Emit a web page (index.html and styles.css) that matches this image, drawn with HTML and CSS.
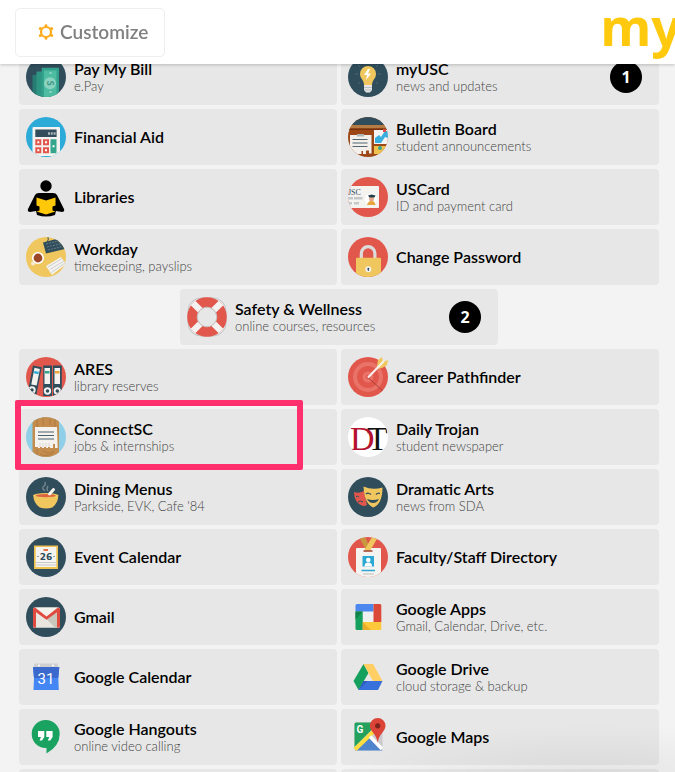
FILE: index.html
```html
<!DOCTYPE html>
<html lang="en">
<head>
<meta charset="utf-8">
<title>myUSC</title>
<meta name="viewport" content="width=device-width, initial-scale=1">
<link rel="stylesheet" href="styles.css">
</head>
<body>
<header class="topbar">
  <button class="customize" type="button">
    <svg class="gear" viewBox="0 0 16 16" aria-hidden="true"><circle cx="8" cy="8" r="5" fill="none" stroke="#fdab1c" stroke-width="2.2"/><g fill="#fdab1c"><circle cx="8" cy="1.6" r="1.4"/><circle cx="8" cy="14.4" r="1.4"/><circle cx="2.3" cy="4.6" r="1.5"/><circle cx="13.7" cy="4.6" r="1.5"/><circle cx="2.3" cy="11.4" r="1.5"/><circle cx="13.7" cy="11.4" r="1.5"/></g></svg>
    <span>Customize</span>
  </button>
  <span class="brand">my</span>
</header>
<main class="tiles">
  <a class="tile" href="#">
    <svg class="icon round" viewBox="0 0 40 40"><path fill="#304d5c" d="M0 0h40v40H0z"/><path fill="#267c72" d="M6.5 18h6v22h-6z"/><path fill="#2f9583" d="M10.5 14.5h7V40h-7z"/><path fill="#32a28c" d="M15.7 10.7H33V40H15.7z"/><path fill="#4dbca1" d="M18 13.5h12.5V40H18z"/><path fill="#8ed6c4" d="M23.5 15h2v2h-2zM23.5 34h2v2h-2z"/><circle cx="24" cy="26.3" r="6" fill="#8bd2c0"/><text x="24" y="29.5" text-anchor="middle" class="coin" transform="rotate(90 24 26.3)">S</text></svg>
    <span class="label"><span class="name">Pay My Bill</span><span class="note">e.Pay</span></span>
  </a>
  <a class="tile" href="#">
    <svg class="icon round" viewBox="0 0 40 40"><path fill="#304d5c" d="M0 0h40v40H0z"/><path stroke="#4c6673" stroke-width="1" d="M20 3v3M7 17h3M30 17h3M10 8l2 2M30 8l-2 2M10 27l2-2M30 27l-2-2"/><path fill="#efc75e" d="M20 9a8 8 0 0 0-8 8c0 4.500 4 6 4 11h8c0-5 4-6.500 4-11a8 8 0 0 0-8-8z"/><path fill="#fff" d="M20 12l-4 6h3l-1 5 5-6.500h-3l2-4.500z"/><path fill="#e6e6e4" d="M16 28h8v5l-2 2.500h-4L16 33z"/><path stroke="#b9c0c3" d="M16 30.500h8M16 33h8"/></svg>
    <span class="label"><span class="name">myUSC</span><span class="note">news and updates</span></span>
    <span class="badge">1</span>
  </a>
  <a class="tile" href="#">
    <svg class="icon round" viewBox="0 0 40 40"><path fill="#2caad8" d="M0 0h40v40H0z"/><rect x="6.500" y="10" width="27.500" height="29" rx="1" fill="#f5f3f1"/><path fill="#324d5b" d="M9.300 12.600h21.300V20H9.300z"/><path stroke="#a9b6bc" stroke-width="2.500" stroke-dasharray="2 .8" d="M22 16.500h8"/><path fill="#e2574c" d="M9.300 22.300h6v6h-6zM17 22.300h6v6h-6zM9.300 30.300h6v6h-6zM17 30.300h6v6h-6z"/><path fill="#35a68b" d="M24.500 22.300h6v14h-6z"/><path fill="#fff" d="M11.300 24.300h2v2h-2zM19 24.300h2v2h-2zM11.300 32.300h2v2h-2zM19 32.300h2v2h-2zM26.500 28.300h2v2h-2z"/></svg>
    <span class="label"><span class="name">Financial Aid</span></span>
  </a>
  <a class="tile" href="#">
    <svg class="icon round" viewBox="0 0 40 40"><path fill="#9c4715" d="M0 0h40v40H0z"/><path fill="#304d5c" d="M0 0h40v8H0z"/><path fill="#b67b42" d="M0 8h40v3.500H0z"/><path fill="#742f0d" d="M0 11.500h40V13H0z"/><path fill="#f3f0eb" d="M2 18h21.500v18.500H21v-3h-3V37h-3v-3h-1.500v3H2z"/><path fill="#aeb5b5" d="M9 17h7v2.500H9z"/><path stroke="#506670" stroke-width="1.200" d="M4.500 22.500h15M4.500 26h15M4.500 29.500h15"/><path fill="#f5f4f2" d="M26 13h14v14H26z"/><path fill="#3aaedc" d="M27 21l4-3 2 2 4-6h3v7l-3-1-4 6h-6z"/><path fill="#e04a3f" d="M35 12h3v3h-3z"/><path fill="#efc14f" d="M26 29h13v8H26z"/><circle cx="32" cy="31" r="2" fill="#35a68b"/></svg>
    <span class="label"><span class="name">Bulletin Board</span><span class="note">student announcements</span></span>
  </a>
  <a class="tile" href="#">
    <svg class="icon" viewBox="0 0 40 40"><circle cx="20" cy="9" r="5.700"/><path d="M9 18q1-2 4-2h14q3 0 4 2l7 14q1 3-2 3l-6-1-1 4q-9 3-18 0l-1-4-6 1q-3 0-2-3z"/><path fill="#ffc909" d="M10.500 20.500l9.500 3 9.500-3v8l-3 1v4l3 1-9.500 3-9.500-3 3-1v-4l-3-1z"/></svg>
    <span class="label"><span class="name">Libraries</span></span>
  </a>
  <a class="tile" href="#">
    <svg class="icon round" viewBox="0 0 40 40"><path fill="#e2574c" d="M0 0h40v40H0z"/><path fill="#f5f3f0" d="M0 9h30q1 0 1 1v20q0 1-1 1H0z"/><text x="0" y="18" class="card-mark">JSC</text><path fill="#c3c8ca" d="M0 20h5v2.500H0zM6 20h8.500v2.500H6zM0 25h4v2.500H0zM6 25h5v2.500H6z"/><circle cx="23" cy="22.500" r="6" fill="#fff"/><circle cx="23.500" cy="22" r="2.500" fill="#e9a98f"/><path fill="#263d4b" d="M20 18.500l3.500-1 4 1-1 2h-5z"/><path fill="#e6a63f" d="M19 28q1-4 4.500-4t4 4z"/></svg>
    <span class="label"><span class="name">USCard</span><span class="note">ID and payment card</span></span>
  </a>
  <a class="tile" href="#">
    <svg class="icon round" viewBox="0 0 40 40"><path fill="#efc75e" d="M0 0h40v40H0z"/><path fill="none" stroke="#304d5c" d="M21 5q2-2 1-5"/><path fill="#304d5c" d="M17 5.500L34 1l5 11-19 4.500z"/><g stroke="#60747e" stroke-width="1.200" stroke-dasharray="2 1"><path d="M20 7l14-3.500M21 10l14-3.500M22 13l14-3.500"/></g><circle cx="12" cy="21" r="6" fill="#fff"/><circle cx="7" cy="26.500" r="2" fill="#f6ead0"/><circle cx="12" cy="21" r="4.400" fill="#9d4728"/><path fill="#f4f2ee" d="M20 29l15-9 5 7-14 11z"/><path stroke="#cdced0" d="M22 30l14-8.500M24 32.500l14-8.500M25.500 35.500L39 26"/></svg>
    <span class="label"><span class="name">Workday</span><span class="note">timekeeping, payslips</span></span>
  </a>
  <a class="tile" href="#">
    <svg class="icon round" viewBox="0 0 40 40"><path fill="#e2574c" d="M0 0h40v40H0z"/><path fill="none" stroke="#dcdcdc" stroke-width="3.200" d="M13.300 22v-5.500a6.800 6.800 0 0 1 13.600 0V22"/><rect x="8" y="20.700" width="25" height="20" rx="1" fill="#efc75e"/><circle cx="20.300" cy="32.300" r="3" fill="#f3f1ed"/><circle cx="20.300" cy="31.700" r="1" fill="#304d5c"/><path fill="#304d5c" d="M19.800 32h1v2h-1z"/></svg>
    <span class="label"><span class="name">Change Password</span></span>
  </a>
  <a class="tile centered" href="#">
    <svg class="icon" viewBox="0 0 40 40"><rect x="1" y="1" width="38" height="38" rx="13" fill="none" stroke="#c0c5c8"/><circle cx="20" cy="20" r="14.700" fill="none" stroke="#e2574c" stroke-width="10.200"/><g stroke="#f4f2f0" stroke-width="6.500"><path d="M6 6l7.300 7.300M34 6l-7.300 7.300M6 34l7.300-7.300M34 34l-7.300-7.300"/></g><circle cx="20" cy="20" r="9.800" fill="none" stroke="#c4c6c8"/></svg>
    <span class="label"><span class="name">Safety &amp; Wellness</span><span class="note">online courses, resources</span></span>
    <span class="badge">2</span>
  </a>
  <a class="tile" href="#">
    <svg class="icon round" viewBox="0 0 40 40"><path fill="#e2574c" d="M0 0h40v40H0z"/><path fill="#304d5c" d="M17.200 8.500H26V39h-8.800zM27 8.500h8.800V39H27z"/><path fill="#f4f2ef" d="M18.500 11h5.500v16h-5.500zM28.500 11H34v16h-5.500z"/><path fill="#35a68b" d="M19 14h4.500v2.500H19z"/><path fill="#eda63b" d="M29 14h4.500v2.500H29z"/><g transform="rotate(11 8 24)"><path fill="#304d5c" d="M4 9h9v31H4z"/><path fill="#f4f2ef" d="M6 11h5.500v17H6z"/><path fill="#2caad8" d="M6.500 14H11v2.500H6.500z"/></g><g fill="#304d5c" stroke="#f4f2ef" stroke-width="1.900"><circle cx="6" cy="33" r="2.700"/><circle cx="21.500" cy="34" r="2.700"/><circle cx="31.300" cy="34" r="2.700"/></g></svg>
    <span class="label"><span class="name">ARES</span><span class="note">library reserves</span></span>
  </a>
  <a class="tile" href="#">
    <svg class="icon" viewBox="0 0 40 40"><circle cx="20" cy="20" r="20" fill="#e2574c"/><circle cx="20" cy="20" r="13" fill="none" stroke="#e97369" stroke-width="4"/><circle cx="20" cy="20" r="5.500" fill="#e97369"/><circle cx="20" cy="20" r="2" fill="#e2574c"/><path stroke="#ac4039" d="M20 20.500l14.500 13"/><path fill="#efc75e" d="M29 9l1-6 4-3 1 5 5-2-1 5-5 3-5 1z"/><path stroke="#f6f3ef" stroke-width="2" d="M20 20.500L36 4"/></svg>
    <span class="label"><span class="name">Career Pathfinder</span></span>
  </a>
  <a class="tile highlighted" href="#">
    <svg class="icon round" viewBox="0 0 40 40"><path fill="#8fcfe7" d="M0 0h40v40H0z"/><path fill="#c48d4e" d="M6.500 0h26.500v40H6.500z"/><path fill="none" stroke="#ad773b" stroke-width=".8" d="M11 2v8M17 0v8M24 2v6M29 2v8M11 32v7M17 34q6 4 11 0M14 37q7 4 14-2"/><path fill="#f5f2ee" d="M9 10h22l.7 21H29v-4h-2v4h-3v-1h-2v1h-2v-1h-2v1h-2v-1h-2v1h-2v-1h-3z"/><path stroke="#4a606c" stroke-width="1.200" d="M12 15h16M12 18.500h16M12 22h16"/><path stroke="#c9c6c1" stroke-width=".6" d="M14 26v4M17 26v4M20 26v4M23 26v4"/></svg>
    <span class="label"><span class="name">ConnectSC</span><span class="note">jobs &amp; internships</span></span>
  </a>
  <a class="tile" href="#">
    <svg class="icon round" viewBox="0 0 40 40"><path fill="#fff" d="M0 0h40v40H0z"/><text x="19" y="33" class="trojan trojan-t">T</text><text x="2" y="33" class="trojan trojan-d">D</text></svg>
    <span class="label"><span class="name">Daily Trojan</span><span class="note">student newspaper</span></span>
  </a>
  <a class="tile" href="#">
    <svg class="icon round" viewBox="0 0 40 40"><path fill="#304d5c" d="M0 0h40v40H0z"/><path fill="none" stroke="#71838c" stroke-width="1.500" d="M19 14q-4-3-1-5 2-1 1-4M22 14q-2-2 0-5"/><path fill="#efc75e" d="M7.300 18h25q0 8-6 12.500-6 2-12.500 0Q7.300 26 7.300 18z"/><ellipse cx="19.800" cy="18.500" rx="12.500" ry="2.500" fill="#efc75e"/><ellipse cx="19.800" cy="18.700" rx="10" ry="1.600" fill="#dc6440"/><path stroke="#f7f3ed" stroke-width="3" stroke-linecap="round" d="M23.500 17l4-4.500"/></svg>
    <span class="label"><span class="name">Dining Menus</span><span class="note">Parkside, EVK, Cafe '84</span></span>
  </a>
  <a class="tile" href="#">
    <svg class="icon round" viewBox="0 0 40 40"><path fill="#304d5c" d="M0 0h40v40H0z"/><path fill="#e2574c" d="M6 15q5 2 10-1l3 14q-2 1-4 1-9-3-9-14z"/><path stroke="#304d5c" fill="none" d="M8 20q2-2 3 0M10 25q2-2 5 0"/><path fill="#efc75e" d="M15.500 9.500q9 4 19 1 0 16-9 20-9-3-10-21z"/><path fill="none" stroke="#304d5c" stroke-width="1.300" d="M18 17q2-2 5 .5M28 17.500q2-2 4-1"/><path fill="#304d5c" d="M19 22q6 2 12 0-2 4-6 4-4 0-6-4z"/></svg>
    <span class="label"><span class="name">Dramatic Arts</span><span class="note">news from SDA</span></span>
  </a>
  <a class="tile" href="#">
    <svg class="icon round" viewBox="0 0 40 40"><path fill="#304d5c" d="M0 0h40v40H0z"/><path fill="#efc14f" d="M8 8.500h24V32H8z"/><path fill="#f6f4f1" d="M9.700 10h20.600v20H9.700z"/><path stroke="#c8c8c6" d="M9.700 25.500h20.600M9.700 28h20.600"/><path fill="#e2723f" d="M17.500 12h4.500v2h-4.500z"/><text x="20" y="22.500" text-anchor="middle" class="day">26</text><path fill="#304d5c" d="M11.500 19h1v1h-1zM27.500 19h1v1h-1z"/></svg>
    <span class="label"><span class="name">Event Calendar</span></span>
  </a>
  <a class="tile" href="#">
    <svg class="icon round" viewBox="0 0 40 40"><path fill="#e2574c" d="M0 0h40v40H0z"/><rect x="8" y="11" width="25" height="32" rx="1" fill="#f5f3f0"/><path fill="#c9973f" d="M11 0h6l6 13h-5z"/><path fill="#efc75e" d="M24 0h6l-8 14h-6z"/><path stroke="#a13f35" stroke-width="1.500" d="M15.500 14h9"/><path fill="#2ba7d3" d="M14.500 19H26v10.500H14.500z"/><circle cx="20.300" cy="23" r="2.300" fill="#fff"/><path fill="#fff" d="M16.500 29.500q0-4 3.800-4t3.800 4z"/><path stroke="#2ba7d3" stroke-width="1.500" d="M13.500 33.500H27"/><path stroke="#cfcfcd" stroke-width="1.500" d="M15 37h11"/></svg>
    <span class="label"><span class="name">Faculty/Staff Directory</span></span>
  </a>
  <a class="tile" href="#">
    <svg class="icon round" viewBox="0 0 40 40"><path fill="#304d5c" d="M0 0h40v40H0z"/><rect x="7" y="10.500" width="27" height="20.300" rx="1.500" fill="#e8e6de"/><path fill="#c9c6bc" d="M20.500 22L31 14v16.800h-2z"/><path fill="#f4f2ec" d="M9 10.500h23l-11.500 9z"/><path fill="#e04b40" d="M7 12q0-1.500 2-1.500l11.500 9 11.500-9q2 0 2 1.500v17q0 1.800-1.800 1.800H31V15.200l-10.500 7.600L10 15.200v15.600H8.800Q7 30.800 7 29z"/></svg>
    <span class="label"><span class="name">Gmail</span></span>
  </a>
  <a class="tile" href="#">
    <svg class="icon" viewBox="0 0 40 40"><path fill="#f0f0f0" d="M15 14h11v11.500H15z"/><path fill="#4c87ed" d="M9 7h16.500v7.500h-18v-6Q7.500 7 9 7z"/><path fill="#dc4838" d="M25.500 7H32q1.300 0 1.300 1.500V25h-7.800z"/><path fill="#fdc93b" d="M14.500 25h18.800v6.700Q33.300 33 32 33H14.500z"/><path fill="#16a05d" d="M7.500 14.500h7.200V33H9q-1.500 0-1.500-1.300z"/><path fill="#e8ae2b" d="M14.700 25l8 8h-8z"/><path fill="#118249" d="M7.500 14.500h7.200l-7.200 8z"/></svg>
    <span class="label"><span class="name">Google Apps</span><span class="note">Gmail, Calendar, Drive, etc.</span></span>
  </a>
  <a class="tile" href="#">
    <svg class="icon" viewBox="0 0 40 40"><rect x="8" y="6.500" width="24" height="5" rx="1" fill="#d0d0d0"/><circle cx="13" cy="8.500" r="1" fill="#fff"/><circle cx="27" cy="8.500" r="1" fill="#fff"/><path fill="#4386f4" d="M7 10h26.300l-1 11 .5 12H7.500l.5-12z"/><path fill="#3b69ce" d="M7 10h26.300l-1 11H8z"/><text x="20" y="27" text-anchor="middle" class="date">31</text></svg>
    <span class="label"><span class="name">Google Calendar</span></span>
  </a>
  <a class="tile" href="#">
    <svg class="icon" viewBox="0 0 40 40"><path fill="#16a05d" d="M15.500 7l5 9-10 17-5-9z"/><path fill="#ffcf63" d="M15.500 7H25l9.500 17H25z"/><path fill="#3871db" d="M15.500 24h19L30 33H10.500z"/><path fill="#2d5cba" d="M15.500 24h4l-9 9z"/></svg>
    <span class="label"><span class="name">Google Drive</span><span class="note">cloud storage &amp; backup</span></span>
  </a>
  <a class="tile" href="#">
    <svg class="icon" viewBox="0 0 40 40"><path fill="#1aa260" d="M19.700 3a14 14 0 0 0 0 28h.8v5.500Q33.700 29 33.700 17a14 14 0 0 0-14-14z"/><path fill="#fff" d="M12 14h6.300v6L16 23.500h-2.500l1.500-3.500h-3zM20.300 14h6.300v6l-2.300 3.500h-2.500l1.500-3.500h-3z"/></svg>
    <span class="label"><span class="name">Google Hangouts</span><span class="note">online video calling</span></span>
  </a>
  <a class="tile" href="#">
    <svg class="icon" viewBox="0 0 40 40"><rect x="6.500" y="5.500" width="28" height="28" rx="1.500" fill="#c9cbcd"/><path fill="#23a15d" d="M8 5.500h23L6.500 30V7Q6.500 5.500 8 5.500z"/><path fill="#4f85cd" d="M20.500 19.500l14 14H7z"/><path stroke="#ffdc3f" stroke-width="4" d="M7 32.500L26 14"/><path stroke="#fff" stroke-width="3.500" d="M22 19.500L34 32"/><path fill="#db4437" d="M29.700 1a7.800 7.800 0 0 0-7.800 7.800c0 6 6.500 7.500 7.800 17 1.300-9.500 7.800-11 7.800-17A7.800 7.800 0 0 0 29.700 1z"/><circle cx="29.700" cy="8.800" r="2.600" fill="#7b231c"/><text x="8.500" y="15.500" class="map-mark">G</text></svg>
    <span class="label"><span class="name">Google Maps</span></span>
  </a>
  <a class="tile" href="#" aria-hidden="true"></a>
  <a class="tile" href="#" aria-hidden="true"></a>
</main>
<div class="corner-shade"></div>
</body>
</html>
```
FILE: styles.css
```css
* {
  box-sizing: border-box;
}

body {
  margin: 0;
  height: 100vh;
  overflow: hidden;
  background: #f3f3f3;
  color: #000;
  font-family: Lato, "Liberation Sans", sans-serif;
}

.topbar {
  position: fixed;
  inset: 0 0 auto;
  z-index: 2;
  display: flex;
  justify-content: space-between;
  align-items: center;
  height: 64px;
  padding-left: 15px;
  overflow: hidden;
  background: #fff;
  box-shadow: 0 1px 3px rgba(0, 0, 0, 0.2);
}

.customize {
  display: flex;
  align-items: center;
  gap: 6px;
  height: 49px;
  padding: 0 16px 0 22px;
  border: 1px solid #eee;
  border-radius: 5px;
  background: #fff;
  color: #808080;
  font: 600 19px/24px Lato, sans-serif;
}

.gear {
  width: 16px;
  height: 16px;
}

.brand {
  align-self: flex-start;
  margin-right: -6px;
  color: #ffc90e;
  font: bold 52px/52px "Noto Sans", sans-serif;
}

.tiles {
  display: flex;
  flex-wrap: wrap;
  justify-content: center;
  gap: 4px;
  padding: 49px 16px 0 19px;
}

.tile {
  position: relative;
  display: flex;
  align-items: center;
  gap: 8px;
  width: calc(50% - 2px);
  height: 56px;
  padding: 0 17px 0 7px;
  border-radius: 4px;
  background: #e7e7e7;
  color: inherit;
  text-decoration: none;
}

.centered {
  margin: 0 25%;
}

.highlighted::after {
  content: "";
  position: absolute;
  inset: -9px 34px -5px -4px;
  z-index: 1;
  border: 6px solid #ff2e6c;
  border-radius: 2px;
}

.icon {
  flex: none;
  width: 40px;
  height: 40px;
}

.round {
  border-radius: 50%;
}

.label {
  flex: 1;
  display: flex;
  flex-direction: column;
}

.name {
  font-size: 16px;
  font-weight: 600;
  line-height: 18px;
}

.note {
  color: #444;
  font-size: 13px;
  font-weight: 300;
  line-height: 16px;
}

.badge {
  width: 32px;
  height: 32px;
  border-radius: 50%;
  background: #000;
  color: #fff;
  font: bold 16px/32px "Open Sans", sans-serif;
  text-align: center;
}

.coin {
  fill: #38957f;
  font: bold 9px Lato, sans-serif;
}

.card-mark {
  fill: #304d5c;
  font: 8px "Liberation Serif", serif;
}

.trojan {
  font: 34px "Liberation Serif", serif;
}

.trojan-d {
  fill: #b5122f;
}

.trojan-t {
  fill: #111;
}

.day {
  fill: #304d5c;
  font: bold 9px "DejaVu Sans", sans-serif;
}

.date {
  fill: #fff;
  font: 15px Roboto, sans-serif;
}

.map-mark {
  fill: #fff;
  font: bold 10px Roboto, sans-serif;
}

.corner-shade {
  position: fixed;
  right: 0;
  bottom: 0;
  width: 50%;
  height: 48px;
  pointer-events: none;
  background: radial-gradient(ellipse at 75% 100%, rgba(0, 0, 0, 0.05), transparent 70%);
}
```
